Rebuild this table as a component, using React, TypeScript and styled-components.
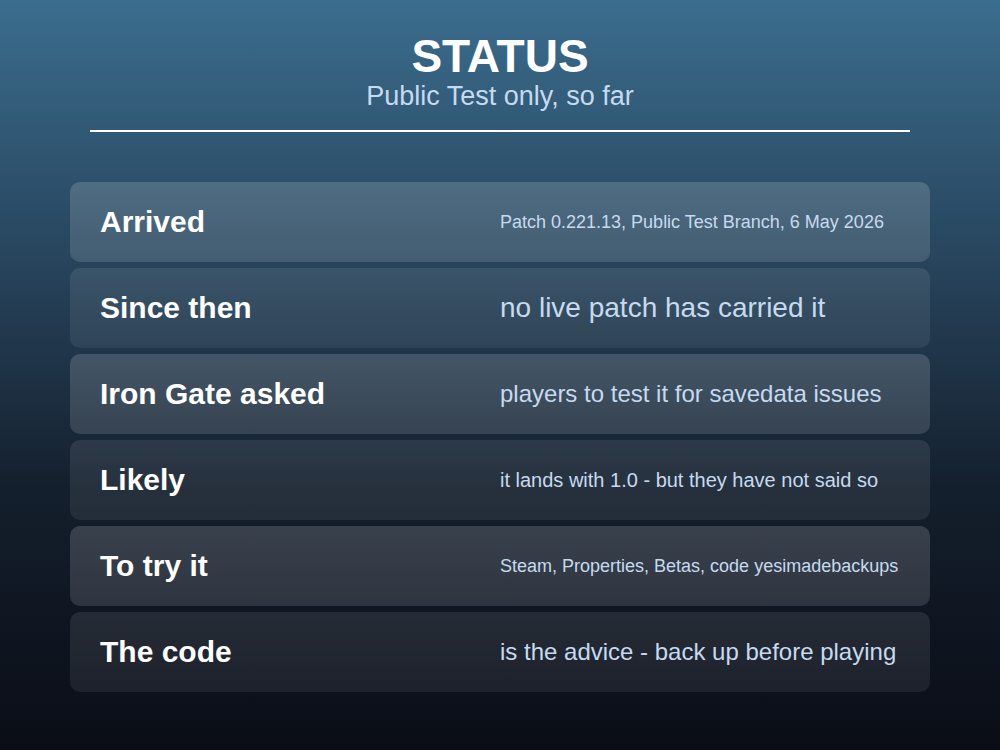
import React from "react";
import styled, { createGlobalStyle } from "styled-components";

const Global = createGlobalStyle`
  html, body { margin: 0; padding: 0; }
  body {
    width: 1000px;
    height: 750px;
    overflow: hidden;
    font-family: "Liberation Sans", Arial, sans-serif;
    background: linear-gradient(180deg, #3b6d8e 0%, #27445c 35%, #141f2d 65%, #0a0d16 100%);
  }
`;

const Page = styled.main`
  width: 1000px;
  height: 750px;
  box-sizing: border-box;
  padding-top: 33px;
  display: flex;
  flex-direction: column;
  align-items: center;
`;

const Title = styled.h1`
  margin: 0;
  font-size: 46px;
  line-height: 1;
  font-weight: 700;
  color: #ffffff;
`;

const Subtitle = styled.p`
  margin: 4px 0 0;
  font-size: 27px;
  line-height: 1;
  color: #c6daf0;
`;

const Rule = styled.hr`
  width: 820px;
  height: 2px;
  border: 0;
  margin: 20px 0 0;
  background: #ffffff;
`;

const List = styled.section`
  margin-top: 50px;
  width: 860px;
  display: flex;
  flex-direction: column;
  gap: 6px;
`;

const Row = styled.div<{ $light: boolean }>`
  height: 80px;
  box-sizing: border-box;
  padding: 0 30px;
  border-radius: 10px;
  display: grid;
  grid-template-columns: 400px 1fr;
  align-items: center;
  background: ${(p) =>
    p.$light
      ? "linear-gradient(180deg, rgba(255,255,255,0.16), rgba(255,255,255,0.13))"
      : "linear-gradient(180deg, rgba(255,255,255,0.09), rgba(255,255,255,0.07))"};
`;

const Label = styled.span`
  font-size: 30px;
  font-weight: 700;
  color: #ffffff;
  white-space: nowrap;
`;

const Value = styled.span<{ $size: number }>`
  font-size: ${(p) => p.$size}px;
  color: #c6daf0;
  white-space: nowrap;
`;

const rows: { label: string; value: string; size: number }[] = [
  { label: "Arrived", value: "Patch 0.221.13, Public Test Branch, 6 May 2026", size: 18 },
  { label: "Since then", value: "no live patch has carried it", size: 28 },
  { label: "Iron Gate asked", value: "players to test it for savedata issues", size: 24 },
  { label: "Likely", value: "it lands with 1.0 - but they have not said so", size: 20 },
  { label: "To try it", value: "Steam, Properties, Betas, code yesimadebackups", size: 18 },
  { label: "The code", value: "is the advice - back up before playing", size: 24 },
];

export default function App() {
  return (
    <>
      <Global />
      <Page>
        <Title>STATUS</Title>
        <Subtitle>Public Test only, so far</Subtitle>
        <Rule />
        <List>
          {rows.map((r, i) => (
            <Row key={r.label} $light={i % 2 === 0}>
              <Label>{r.label}</Label>
              <Value $size={r.size}>{r.value}</Value>
            </Row>
          ))}
        </List>
      </Page>
    </>
  );
}
